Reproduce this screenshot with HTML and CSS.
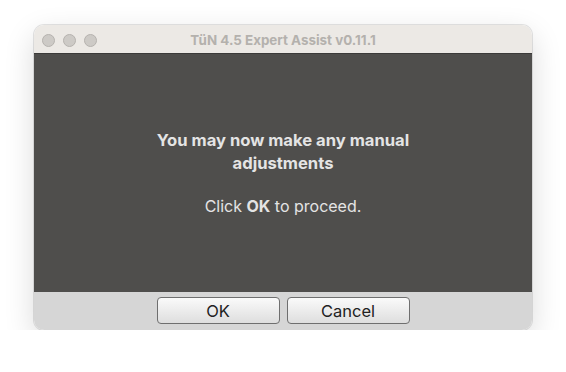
FILE: index.html
```html
<!DOCTYPE html>
<html>
<head>
<meta charset="utf-8">
<link rel="stylesheet" href="styles.css">
</head>
<body>
<div class="window">
  <div class="titlebar">
    <div class="lights">
      <span class="light"></span>
      <span class="light"></span>
      <span class="light"></span>
    </div>
    <div class="title">TüN 4.5 Expert Assist v0.11.1</div>
  </div>
  <div class="content">
    <p class="headline">You may now make any manual<br>adjustments</p>
    <p class="message">Click <b>OK</b> to proceed.</p>
  </div>
  <div class="buttonbar">
    <button class="btn">OK</button>
    <button class="btn">Cancel</button>
  </div>
</div>
</body>
</html>
```
FILE: styles.css
```css
html, body {
  margin: 0;
  padding: 0;
  background: #ffffff;
}
body {
  font-family: Inter, "Liberation Sans", sans-serif;
  padding: 25px 0 0 34px;
}
.window {
  width: 498px;
  height: 305px;
  border-radius: 10px;
  overflow: hidden;
  display: flex;
  flex-direction: column;
  box-shadow: 0 0 0 1px rgba(0,0,0,0.1), 0 10px 30px rgba(0,0,0,0.15);
}
.titlebar {
  height: 28px;
  flex: none;
  background: #ece9e5;
  border-bottom: 1px solid #3b3a39;
  position: relative;
  display: flex;
  align-items: center;
  justify-content: center;
}
.lights {
  position: absolute;
  left: 8px;
  top: 9px;
  display: flex;
  gap: 8px;
}
.light {
  width: 11px;
  height: 11px;
  border-radius: 50%;
  background: #cdcac6;
  border: 0.5px solid #b5b2ae;
}
.title {
  font-size: 13.4px;
  font-weight: 700;
  color: #b4b1ad;
  margin-top: 1px;
}
.content {
  flex: 1;
  background: #4f4e4c;
  display: flex;
  flex-direction: column;
  align-items: center;
  justify-content: center;
  text-align: center;
  color: #e4e4e4;
}
.headline {
  margin: 0;
  font-size: 16.6px;
  font-weight: 700;
  line-height: 23px;
}
.message {
  margin: 20px 0 0;
  font-size: 16px;
  line-height: 23px;
}
.buttonbar {
  height: 38px;
  flex: none;
  background: #d6d6d6;
  display: flex;
  justify-content: center;
  align-items: flex-start;
  gap: 7px;
  padding-top: 5px;
  box-sizing: border-box;
}
.btn {
  width: 123px;
  height: 27px;
  border: 1px solid #6f6f6f;
  border-radius: 4px;
  background: linear-gradient(#fafafa, #dedede);
  font-family: Inter, "Liberation Sans", sans-serif;
  font-size: 16.5px;
  color: #222222;
  padding: 0;
}
```
